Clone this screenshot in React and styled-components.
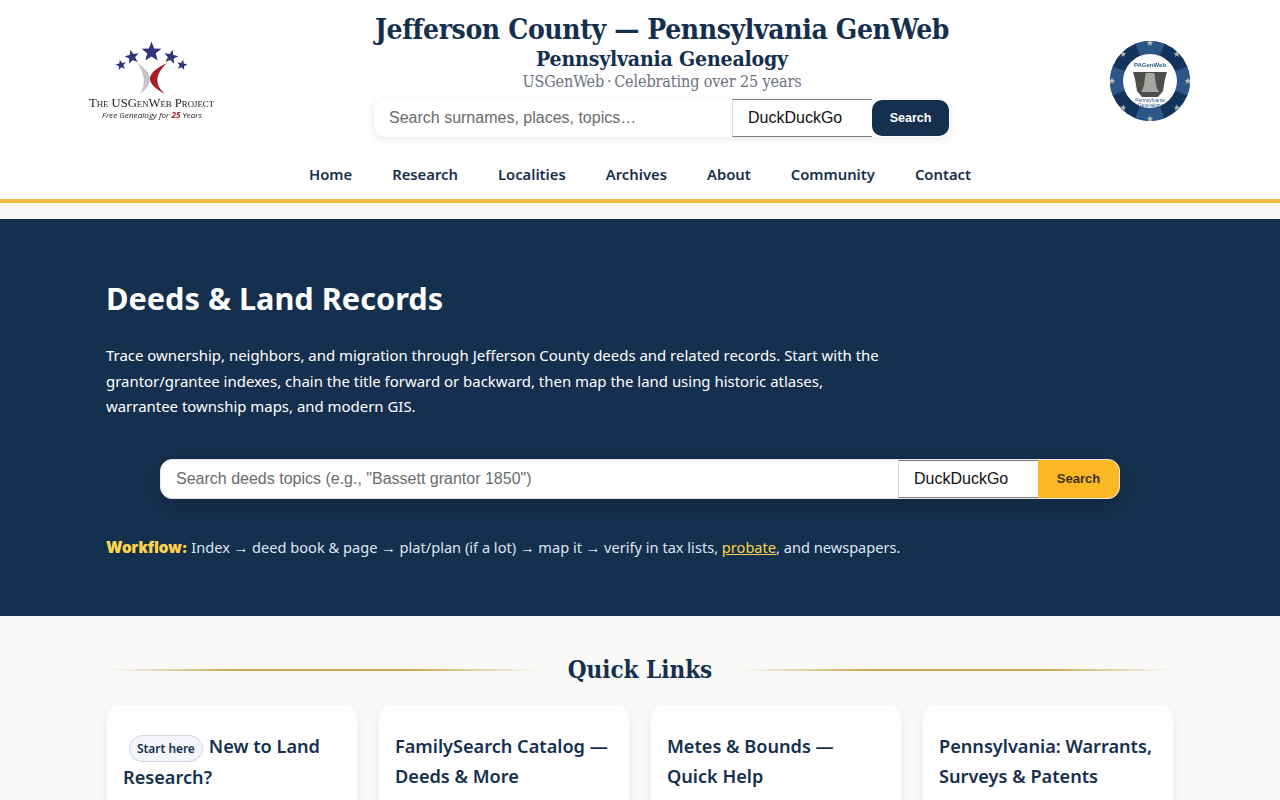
import React from "react";
import styled, { createGlobalStyle } from "styled-components";

const Global = createGlobalStyle`
  html, body { margin: 0; padding: 0; background: #f9f9f7; }
  html { overflow: hidden; }
  body { font-family: "Noto Sans", "Open Sans", sans-serif; color: #152f4e; }
  #root { height: 800px; overflow: hidden; }
  * { box-sizing: border-box; }
`;

const serif = `"DejaVu Serif Condensed", "DejaVu Serif", "Liberation Serif", serif`;

const Header = styled.header`
  background: #fff;
  border-bottom: 4px solid #f1bc3c;
  height: 203px;
  display: flex;
  flex-direction: column;
`;
const Brand = styled.div`
  display: grid;
  grid-template-columns: 374px 576px 1fr;
  padding-top: 13px;
  height: 149px;
`;
const LogoLeft = styled.div`
  padding: 27px 0 0 87px;
`;
const LogoRight = styled.div`
  padding: 28px 0 0 160px;
`;
const Center = styled.div`
  display: flex;
  flex-direction: column;
  align-items: center;
`;
const Title = styled.h1`
  margin: 0;
  font: 700 28px/34px ${serif};
  letter-spacing: -0.37px;
  white-space: nowrap;
  color: #152f4e;
`;
const Subtitle = styled.div`
  font: 700 21.1px/26px ${serif};
  letter-spacing: -0.2px;
  color: #152f4e;
  margin-top: -1px;
`;
const Tagline = styled.div`
  font: 400 16px/20px ${serif};
  letter-spacing: -0.1px;
  color: #6b7280;
  margin-bottom: 7px;
`;
const HeaderSearch = styled.form`
  display: flex;
  width: 576px;
  height: 38px;
  padding-right: 1px;
  border-radius: 12px;
  background: #fff;
  box-shadow: 0 2px 10px rgba(0, 0, 0, 0.1);
`;
const SearchInput = styled.input`
  flex: 1;
  min-width: 0;
  border: 0;
  outline: 0;
  background: transparent;
  padding: 0 15px;
  font: 400 16px "Liberation Sans", Arial, sans-serif;
  &::placeholder { color: #6b6b6b; opacity: 1; }
`;
const EngineBox = styled.div`
  display: flex;
  align-items: center;
  flex: none;
  width: 140px;
  padding-left: 15px;
  background: #fff;
  border-style: solid;
  border-width: 1px 0 1px 1px;
  border-color: #7d7d7d #7d7d7d #7d7d7d #d9d9d9;
  font: 400 16px "Liberation Sans", Arial, sans-serif;
  color: #111;
`;
const NavySearch = styled.button`
  flex: none;
  width: 77px;
  height: 36px;
  margin-top: 1px;
  border: 0;
  border-radius: 10px;
  background: #152f4e;
  color: #fff;
  font: 700 12.5px "Liberation Sans", Arial, sans-serif;
`;
const Nav = styled.nav`
  display: flex;
  justify-content: center;
  gap: 40px;
  height: 47px;
  padding-top: 13px;
`;
const NavLink = styled.a`
  font: 600 14.8px/24px "Noto Sans", sans-serif;
  color: #152f4e;
`;
const Hero = styled.section`
  margin-top: 16px;
  height: 397px;
  background: #152f4e;
  color: #fff;
  padding: 58px 106px 0;
`;
const HeroTitle = styled.h2`
  margin: 0 0 24px;
  font: 700 30.7px/42px "Noto Sans", sans-serif;
`;
const Lead = styled.p`
  margin: 0;
  max-width: 790px;
  font: 400 14.95px/25.6px "Noto Sans", sans-serif;
`;
const HeroSearch = styled.form`
  display: flex;
  width: 960px;
  height: 40px;
  margin: 39px 0 0 54px;
  border-radius: 12px;
  background: #fff;
  border: 1px solid #e5e7eb;
  overflow: hidden;
  box-shadow: 0 6px 20px rgba(0, 0, 0, 0.2);
`;
const GoldSearch = styled.button`
  flex: none;
  width: 81px;
  border: 0;
  background: #fbb824;
  color: #3a3322;
  font: 700 13px "Liberation Sans", Arial, sans-serif;
`;
const Workflow = styled.p`
  margin: 38px 0 0;
  font: 400 14.6px/20px "Noto Sans", sans-serif;
  color: #dce7f0;
`;
const WorkflowLabel = styled.strong`
  font: 900 15.4px/20px Inter, sans-serif;
  color: #fdd34d;
`;
const Gold = styled.a`
  color: #fdd34d;
  text-decoration: underline;
`;
const Links = styled.section`
  padding: 34px 107px 0;
`;
const SectionHead = styled.div`
  display: flex;
  align-items: center;
  gap: 28px;
  height: 40px;
`;
const Rule = styled.div`
  flex: 1;
  height: 2px;
  background: linear-gradient(90deg, transparent, #c9a94f 30%, #c9a94f 70%, transparent);
`;
const SectionTitle = styled.h2`
  margin: 0;
  font: 700 24px/40px ${serif};
  color: #152f4e;
`;
const Grid = styled.div`
  display: grid;
  grid-template-columns: repeat(4, 250px);
  gap: 22px;
  margin-top: 15px;
`;
const Card = styled.article`
  height: 200px;
  background: #fff;
  border-radius: 14px;
  padding: 26px 16px;
  box-shadow: 0 4px 14px rgba(0, 0, 0, 0.05);
`;
const CardTitle = styled.h3`
  margin: 0;
  font: 600 18.15px/30px "Noto Sans", sans-serif;
  color: #152f4e;
`;
const Pill = styled.span`
  display: inline-block;
  margin: -3px 6px 0 6px;
  padding: 0 7px;
  height: 27px;
  vertical-align: 0;
  border: 1px solid #cfd6e2;
  border-radius: 14px;
  background: #f3f5fa;
  font: 600 11.9px/25px "Noto Sans", sans-serif;
`;
const LogoSvg = styled.svg`
  display: block;
  filter: blur(0.3px);
`;

const starPoints = (cx, cy, r) =>
  Array.from({ length: 10 }, (_, i) => {
    const a = (-90 + i * 36) * (Math.PI / 180);
    const d = i % 2 ? r * 0.42 : r;
    return `${(cx + d * Math.cos(a)).toFixed(2)},${(cy + d * Math.sin(a)).toFixed(2)}`;
  }).join(" ");

const UsGenWebLogo = () => (
  <LogoSvg width="130" height="84" viewBox="0 0 130 84" aria-label="The USGenWeb Project">
    <g fill="#2e3478">
      <polygon points={starPoints(64.5, 12, 10.5)} />
      <polygon points={starPoints(45, 17, 7.5)} transform="rotate(-12 45 17)" />
      <polygon points={starPoints(84, 17, 7.5)} transform="rotate(12 84 17)" />
      <polygon points={starPoints(34, 25, 5.5)} transform="rotate(-12 34 25)" />
      <polygon points={starPoints(95, 25, 5.5)} transform="rotate(12 95 25)" />
    </g>
    <path d="M50 23 Q74.5 38 53 54 Q62 40 50 23Z" fill="#c4c6c9" />
    <path d="M80 23 Q47 38 78 54 Q61.6 40 80 23Z" fill="#a91f27" />
    <text x="2" y="66.5" textLength="125" lengthAdjust="spacingAndGlyphs" fontFamily="Liberation Serif, serif" fontSize="11.5" fontVariant="small-caps" fill="#222">The USGenWeb Project</text>
    <text x="15" y="78" textLength="100" lengthAdjust="spacingAndGlyphs" fontFamily="Open Sans, sans-serif" fontStyle="italic" fontSize="8" fill="#222">
      Free Genealogy for <tspan fill="#a91f27" fontWeight="700">25</tspan> Years
    </text>
  </LogoSvg>
);

const sealStars = [0, 45, 90, 135, 180, 225, 270, 315];

const PaSeal = () => (
  <LogoSvg width="80" height="80" viewBox="0 0 80 80" aria-label="PAGenWeb Pennsylvania Genealogy">
    <circle cx="40" cy="40" r="40" fill="#12335c" />
    <circle cx="40" cy="40" r="33.5" fill="none" stroke="#2c5688" strokeWidth="13" strokeDasharray="25 27.6" transform="rotate(-111.5 40 40)" />
    <g fill="#e6e3c4" opacity="0.75">
      {sealStars.map((a) => {
        const r = (a * Math.PI) / 180;
        return <polygon key={a} points={starPoints(40 + 38 * Math.sin(r), 40 - 38 * Math.cos(r), 3.5)} />;
      })}
    </g>
    <circle cx="40" cy="40" r="27" fill="#fff" />
    <text x="40" y="26" textAnchor="middle" fontFamily="Liberation Sans, sans-serif" fontSize="6" fontWeight="700" fill="#2c5688">PAGenWeb</text>
    <path d="M23 31 H57 L55 38 L53 50 L48 56 H32 L27 50 L25 38Z" fill="#4e4f4d" />
    <path d="M36 32 C34 38 35 46 31 51 H49 C45 46 46 38 44 32Z" fill="#a3a6a1" />
    <text x="40" y="60.5" textAnchor="middle" fontFamily="Liberation Sans, sans-serif" fontSize="5" fill="#2c5688">Pennsylvania</text>
    <text x="40" y="65.5" textAnchor="middle" fontFamily="Liberation Sans, sans-serif" fontSize="5" fill="#2c5688">Genealogy</text>
  </LogoSvg>
);

const navItems = ["Home", "Research", "Localities", "Archives", "About", "Community", "Contact"];

export default function App() {
  return (
    <>
      <Global />
      <Header>
        <Brand>
          <LogoLeft><UsGenWebLogo /></LogoLeft>
          <Center>
            <Title>Jefferson County — Pennsylvania GenWeb</Title>
            <Subtitle>Pennsylvania Genealogy</Subtitle>
            <Tagline>USGenWeb{"\u2009"}·{"\u2009"}Celebrating over 25 years</Tagline>
            <HeaderSearch>
              <SearchInput placeholder="Search surnames, places, topics…" />
              <EngineBox>DuckDuckGo</EngineBox>
              <NavySearch type="button">Search</NavySearch>
            </HeaderSearch>
          </Center>
          <LogoRight><PaSeal /></LogoRight>
        </Brand>
        <Nav>
          {navItems.map((n) => <NavLink key={n}>{n}</NavLink>)}
        </Nav>
      </Header>
      <Hero>
        <HeroTitle>Deeds &amp; Land Records</HeroTitle>
        <Lead>
          Trace ownership, neighbors, and migration through Jefferson County deeds and related records. Start with the grantor/grantee indexes, chain the title forward or backward, then map the land using historic atlases, warrantee township maps, and modern GIS.
        </Lead>
        <HeroSearch>
          <SearchInput placeholder={'Search deeds topics (e.g., "Bassett grantor 1850")'} />
          <EngineBox>DuckDuckGo</EngineBox>
          <GoldSearch type="button">Search</GoldSearch>
        </HeroSearch>
        <Workflow>
          <WorkflowLabel>Workflow:</WorkflowLabel> Index → deed book &amp; page → plat/plan (if a lot) → map it → verify in tax lists, <Gold>probate</Gold>, and newspapers.
        </Workflow>
      </Hero>
      <Links>
        <SectionHead>
          <Rule />
          <SectionTitle>Quick Links</SectionTitle>
          <Rule />
        </SectionHead>
        <Grid>
          <Card><CardTitle><Pill>Start here</Pill>New to Land Research?</CardTitle></Card>
          <Card><CardTitle>FamilySearch Catalog — Deeds &amp; More</CardTitle></Card>
          <Card><CardTitle>Metes &amp; Bounds — Quick Help</CardTitle></Card>
          <Card><CardTitle>Pennsylvania: Warrants, Surveys &amp; Patents</CardTitle></Card>
        </Grid>
      </Links>
    </>
  );
}
